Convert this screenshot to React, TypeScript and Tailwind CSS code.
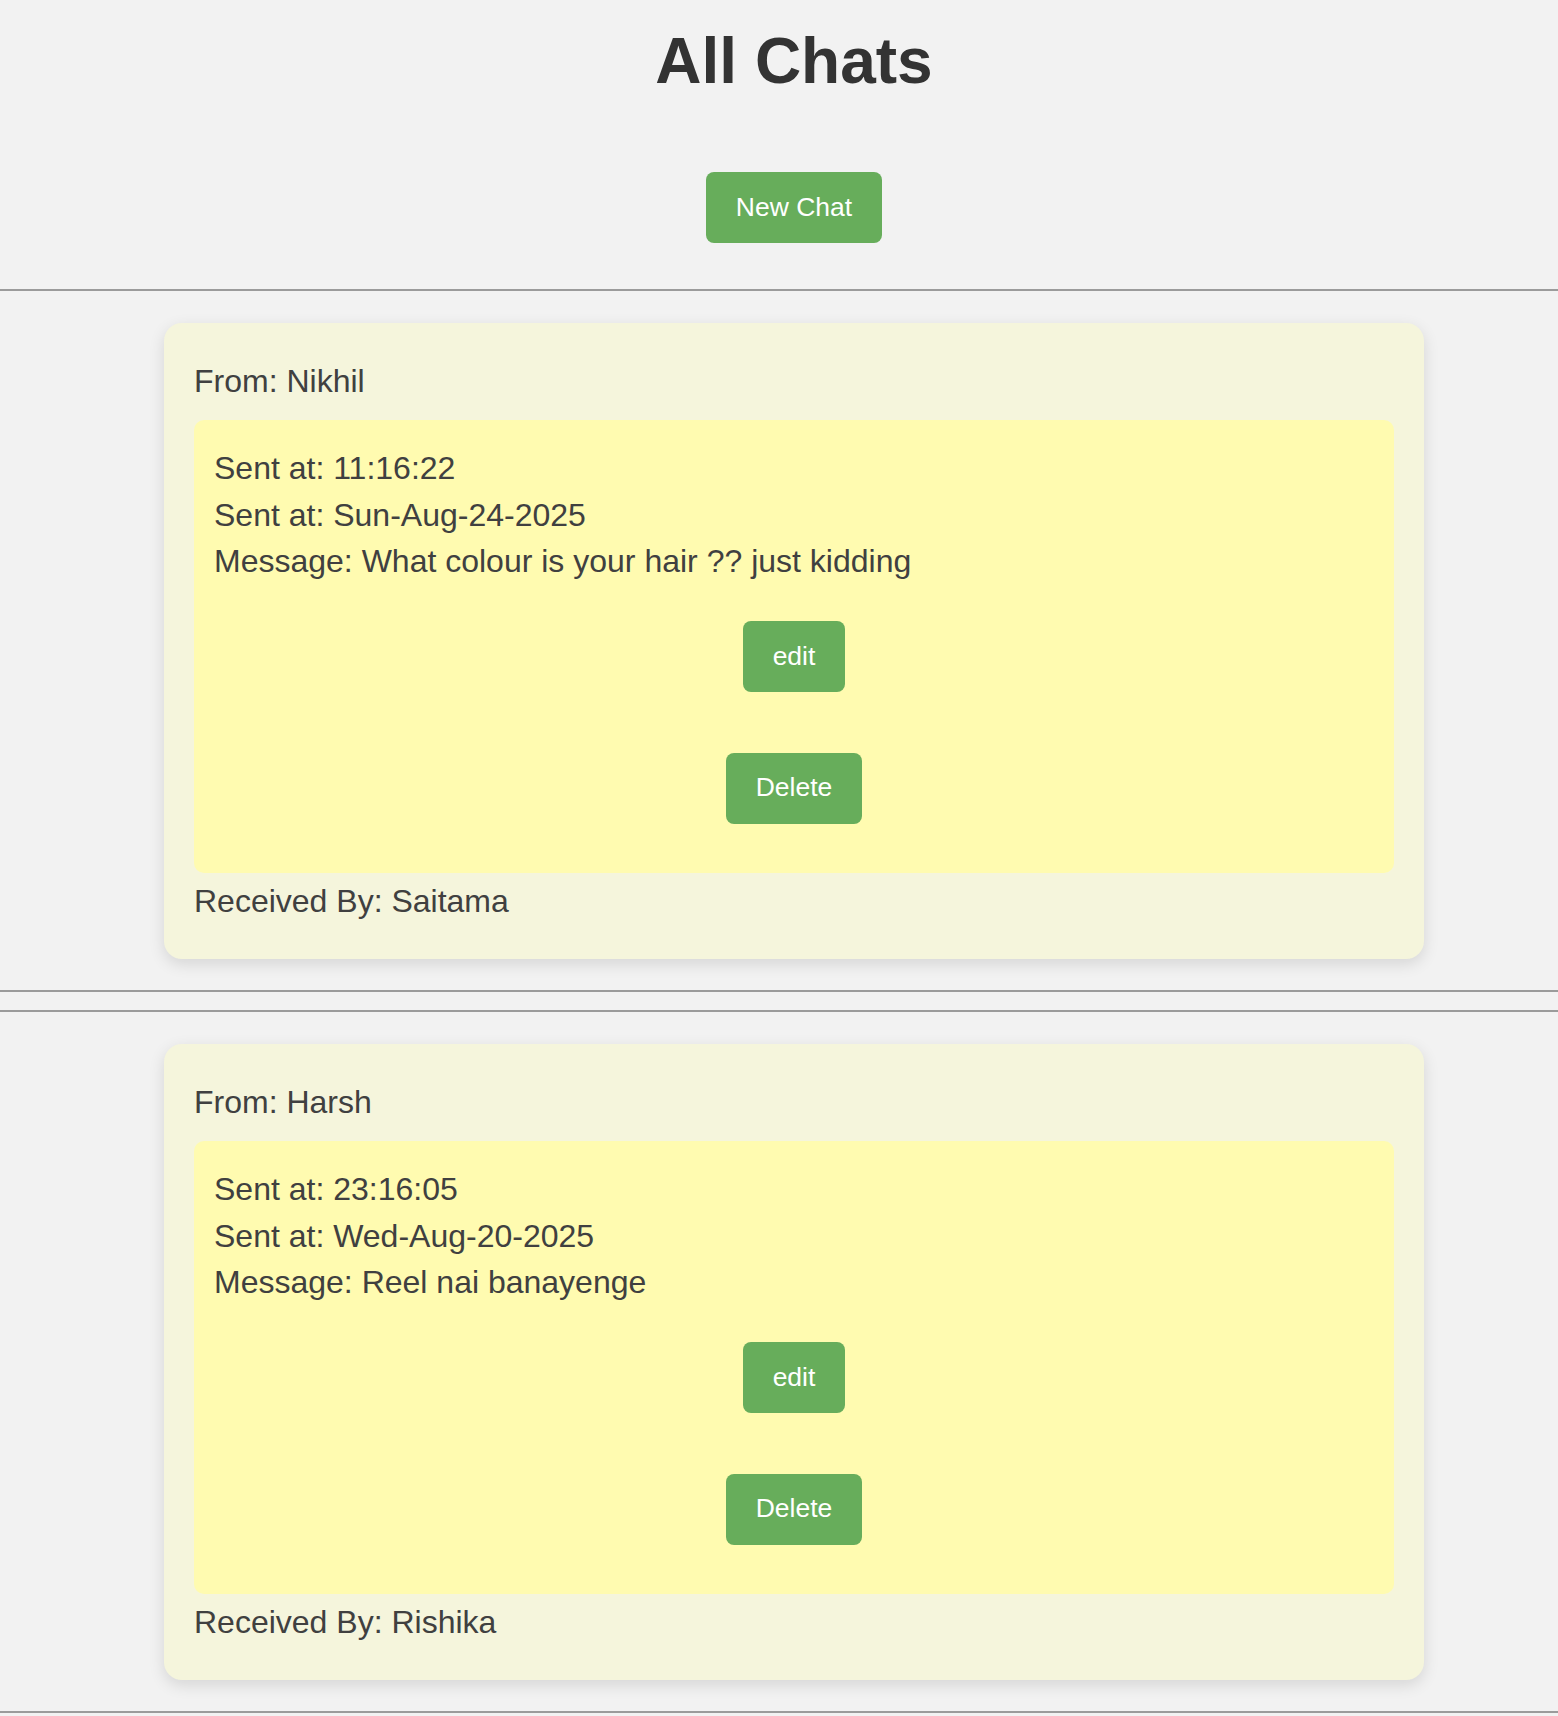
import React from "react";

interface Chat {
  id: number;
  from: string;
  time: string;
  date: string;
  msg: string;
  to: string;
}

const chats: Chat[] = [
  { id: 1, from: "Nikhil", time: "11:16:22", date: "Sun-Aug-24-2025", msg: "What colour is your hair ?? just kidding", to: "Saitama" },
  { id: 2, from: "Harsh", time: "23:16:05", date: "Wed-Aug-20-2025", msg: "Reel nai banayenge", to: "Rishika" },
];

function GreenButton({ label, className = "" }: { label: string; className?: string }) {
  return (
    <button
      className={
        "h-[71px] px-[30px] rounded-[8px] bg-[#67ad5b] text-white text-[26.5px] flex items-center justify-center " +
        className
      }
    >
      {label}
    </button>
  );
}

function Divider() {
  return <div className="h-[2px] w-full bg-[#9b9b9b]" />;
}

function ChatCard({ chat }: { chat: Chat }) {
  return (
    <div className="w-[1260px] mx-auto bg-[#f5f5dc] rounded-[18px] shadow-[0_5px_16px_rgba(0,0,0,0.12)] px-[30px] pt-[40px] pb-[40px]">
      <p className="text-[32px] leading-[36px]">From: {chat.from}</p>
      <div className="mt-[21px] bg-[#fffbb0] rounded-[10px] pl-[20px] pr-[20px] pt-[25px] pb-[49px]">
        <p className="text-[32px] leading-[46.5px]">Sent at: {chat.time}</p>
        <p className="text-[32px] leading-[46.5px]">Sent at: {chat.date}</p>
        <p className="text-[32px] leading-[46.5px]">Message: {chat.msg}</p>
        <div className="flex flex-col items-center mt-[36.5px] gap-[60.5px]">
          <GreenButton label="edit" />
          <GreenButton label="Delete" />
        </div>
      </div>
      <p className="mt-[10.5px] text-[32px] leading-[36px]">Received By: {chat.to}</p>
    </div>
  );
}

export default function App() {
  return (
    <div className="min-h-screen bg-[#f2f2f2] text-[#404040] font-['Liberation_Sans',Arial,sans-serif]">
      <div className="pl-[30px] pt-[24px] pb-[46px] flex flex-col items-center">
        <h1 className="text-[64px] leading-[74px] font-bold text-[#333]">All Chats</h1>
        <GreenButton label="New Chat" className="mt-[74px]" />
      </div>
      {chats.map((chat) => (
        <div key={chat.id} className="mb-[18px]">
          <Divider />
          <div className="pl-[30px] pt-[32px] pb-[31px]">
            <ChatCard chat={chat} />
          </div>
          <Divider />
        </div>
      ))}
    </div>
  );
}
